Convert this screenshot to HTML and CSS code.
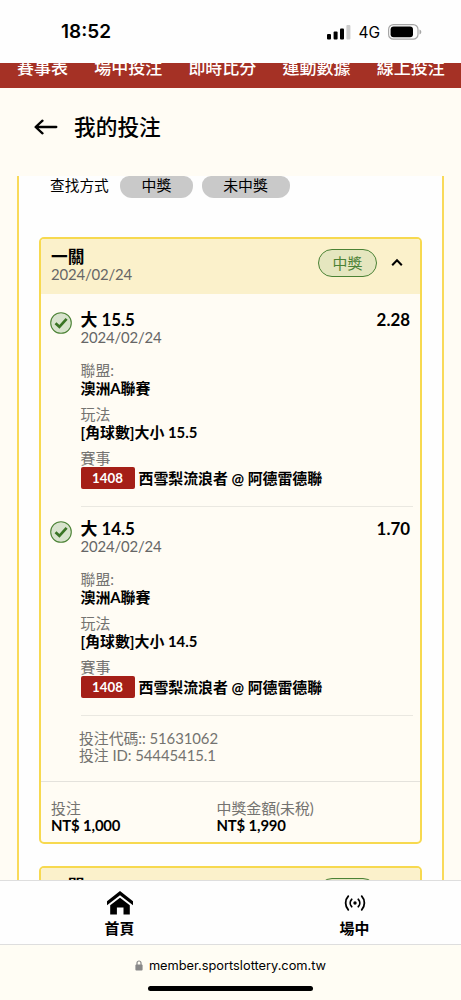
FILE: index.html
```html
<!DOCTYPE html>
<html lang="zh-Hant">
<head>
<meta charset="utf-8">
<title>我的投注</title>
<link rel="stylesheet" href="styles.css">
</head>
<body>
<div class="phone">
  <header class="status">
    <span class="clock">18:52</span>
    <div class="indicators">
      <svg class="signal" width="24" height="15" viewBox="0 0 24 15"><rect x="0" y="9" width="4" height="5.5" rx="1"/><rect x="6.6" y="6.5" width="4" height="8" rx="1"/><rect x="13" y="3.4" width="4" height="11.1" rx="1"/><rect x="19.4" y="0" width="4" height="14.5" rx="1" fill="#ccc"/></svg>
      <span class="network">4G</span>
      <svg class="battery" width="34" height="16" viewBox="0 0 34 16"><rect x=".6" y=".6" width="29.4" height="14.6" rx="4.8" fill="none" stroke="#a6a6a6" stroke-width="1.2"/><rect x="2.6" y="2.5" width="22.4" height="10.8" rx="3"/><path d="M31.5 5.5c2.4.8 2.4 4.200 0 5z" fill="#a6a6a6"/></svg>
    </div>
  </header>
  <nav class="topnav"><span>賽事表</span><span>場中投注</span><span>即時比分</span><span>運動數據</span><span>線上投注</span></nav>
  <div class="title">
    <svg width="24" height="18" viewBox="0 0 24 18" fill="none" stroke="#000" stroke-width="2.300" stroke-linecap="round" stroke-linejoin="round"><path d="M22.300 9H1.800M8.500 2.700L1.600 9l6.900 6.300"/></svg>
    <h1>我的投注</h1>
  </div>
  <main class="scroll">
    <div class="panel">
      <div class="filters"><span class="filter-label">查找方式</span><span class="chip">中獎</span><span class="chip wide">未中獎</span></div>
      <section class="card">
        <div class="card-head">
          <div><h2>一關</h2><p class="date">2024/02/24</p></div>
          <span class="won">中獎</span>
          <svg class="chevron" width="12" height="9" viewBox="0 0 12 9" fill="none" stroke="#000" stroke-width="2"><path d="M1.200 7.300L6 2.300l4.800 5"/></svg>
        </div>
        <div class="legs">
          <article class="leg">
            <svg class="check" width="22" height="22" viewBox="0 0 22 22"><circle cx="11" cy="11" r="10.300" fill="#d8e3cd" stroke="#4b8235" stroke-width="1.100"/><path d="M5.500 11.200l3.900 3.600 7.200-8" fill="none" stroke="#3a7425" stroke-width="2.700"/></svg>
            <div class="leg-body">
              <div class="pick"><span>大 15.5</span><span>2.28</span></div>
              <p class="date">2024/02/24</p>
              <dl><dt>聯盟:</dt><dd>澳洲A聯賽</dd><dt>玩法</dt><dd>[角球數]大小 15.5</dd><dt>賽事</dt></dl>
              <div class="match"><span class="code">1408</span><span>西雪梨流浪者 @ 阿德雷德聯</span></div>
            </div>
          </article>
          <article class="leg">
            <svg class="check" width="22" height="22" viewBox="0 0 22 22"><circle cx="11" cy="11" r="10.300" fill="#d8e3cd" stroke="#4b8235" stroke-width="1.100"/><path d="M5.500 11.200l3.900 3.600 7.200-8" fill="none" stroke="#3a7425" stroke-width="2.700"/></svg>
            <div class="leg-body">
              <div class="pick"><span>大 14.5</span><span>1.70</span></div>
              <p class="date">2024/02/24</p>
              <dl><dt>聯盟:</dt><dd>澳洲A聯賽</dd><dt>玩法</dt><dd>[角球數]大小 14.5</dd><dt>賽事</dt></dl>
              <div class="match"><span class="code">1408</span><span>西雪梨流浪者 @ 阿德雷德聯</span></div>
            </div>
          </article>
        </div>
        <div class="ids"><p>投注代碼:: 51631062</p><p>投注 ID: 54445415.1</p></div>
        <div class="totals">
          <div><p>投注</p><strong>NT$ 1,000</strong></div>
          <div><p>中獎金額(未稅)</p><strong>NT$ 1,990</strong></div>
        </div>
      </section>
      <section class="card">
        <div class="card-head">
          <div><h2>一關</h2><p class="date">2024/02/24</p></div>
          <span class="won">中獎</span>
          <svg class="chevron" width="12" height="9" viewBox="0 0 12 9" fill="none" stroke="#000" stroke-width="2"><path d="M1.200 7.300L6 2.300l4.800 5"/></svg>
        </div>
      </section>
    </div>
  </main>
  <nav class="tabs">
    <div class="tab">
      <svg width="28" height="24" viewBox="0 0 28 24"><path d="M14 0l13 10.200v4L14 4.200 1 14.200v-4z"/><path d="M14 6.800l9.800 7.400V23.500h-6.300v-7h-6.600v7H4.200v-9.300z"/></svg>
      <span>首頁</span>
    </div>
    <div class="tab">
      <svg width="28" height="24" viewBox="0 0 28 24" fill="none" stroke="#000" stroke-width="1.800" stroke-linecap="round"><circle cx="14" cy="12" r="1.700" fill="#000" stroke="none"/><path d="M10.700 8.300a5.400 5.400 0 0 0 0 7.400M17.300 8.300a5.400 5.400 0 0 1 0 7.400M7.300 5.200a10 10 0 0 0 0 13.600M20.700 5.200a10 10 0 0 1 0 13.600"/></svg>
      <span>場中</span>
    </div>
  </nav>
  <footer class="browser">
    <div class="address">
      <svg width="8" height="11" viewBox="0 0 8 11"><path d="M2 5V3a2 2 0 0 1 4 0v2" fill="none" stroke="#888" stroke-width="1.200"/><rect x=".4" y="4.500" width="7.200" height="6" rx="1" fill="#888"/></svg>
      <span>member.sportslottery.com.tw</span>
    </div>
    <div class="home-bar"></div>
  </footer>
</div>
</body>
</html>
```
FILE: styles.css
```css
* { box-sizing: border-box; margin: 0; padding: 0; }
body {
  width: 461px;
  height: 1000px;
  overflow: hidden;
  background: #fffcf4;
  color: #000;
  font-family: Lato, "Noto Sans CJK TC", sans-serif;
  font-size: 14.9px;
}
svg { display: block; flex: none; }
.phone { height: 1000px; display: flex; flex-direction: column; }

.status { height: 63px; flex: none; background: #fefefe; display: flex; justify-content: space-between; padding: 20px 39px 0 61px; font-family: Inter, sans-serif; }
.clock { font-size: 19px; line-height: 24px; font-weight: 600; }
.indicators { display: flex; height: 24px; align-items: center; }
.network { font-size: 15.5px; font-weight: 400; line-height: 25px; margin: 0 8px 0 7px; }

.topnav { height: 24.500px; flex: none; background: #a53125; color: #fff; display: flex; gap: 26.200px; padding-left: 17px; overflow: hidden; font-size: 17px; font-weight: 500; white-space: nowrap; line-height: 9px; }

.title { height: 88px; flex: none; display: flex; align-items: flex-start; padding: 26px 0 0 34px; gap: 16px; }
.title svg { margin-top: 4px; }
.title h1 { font-size: 21.700px; line-height: 26px; font-weight: 500; }

.scroll { height: 704.500px; flex: none; overflow: hidden; padding: 0 17px; }
.panel { height: 730px; background: #fefefe; border: solid #f9da5a; border-width: 0 2px; padding: 0 20px; }
.filters { height: 61.500px; display: flex; align-items: flex-start; padding-left: 11px; }
.filter-label { line-height: 19px; width: 70px; font-size: 14.700px; }
.chip { height: 22.500px; line-height: 19px; width: 73px; text-align: center; background: #c9c9c9; border-radius: 9px 9px 12px 12px; margin-right: 8.500px; }
.chip.wide { width: 88px; }

.card { background: #fffcf4; border: 2px solid #f7d94f; border-radius: 5px; height: 607px; margin-bottom: 21.500px; overflow: hidden; }
.card-head { height: 55px; background: #fbf1cb; display: flex; padding: 9px 17px 0 10px; }
.card-head h2 { font-size: 16.700px; line-height: 18px; font-weight: 600; }
.date { color: #666; line-height: 17px; letter-spacing: -.15px; }
.won { width: 59px; height: 28px; margin: 1px 14px 0 auto; border: 1px solid #4b8235; border-radius: 14px; background: #e5e6bf; color: #4b8235; text-align: center; line-height: 27px; }
.chevron { margin-top: 10px; }

.legs { padding: 4px 7px 0 9px; }
.leg { display: flex; height: 209px; gap: 8.500px; padding-top: 12px; }
.check { margin-top: 2px; }
.leg-body { flex: 1; border-bottom: 1.500px solid #eae8e1; }
.pick { display: flex; justify-content: space-between; padding-right: 3px; font-size: 16.900px; line-height: 20px; height: 19px; font-weight: 700; }
dl { padding-top: 15px; }
dt { line-height: 18px; color: #747370; }
dd { line-height: 19px; font-weight: 700; margin-bottom: 7px; }
.match { display: flex; gap: 4px; line-height: 23px; font-weight: 700; white-space: nowrap; }
.code { background: #a51f17; color: #fff; width: 54px; height: 22px; line-height: 23px; border-radius: 2px; text-align: center; font-size: 13.300px; }

.ids { height: 66px; padding: 14px 0 0 38px; color: #747370; border-bottom: 1px solid #e4e2dc; letter-spacing: -.06px; }
.ids p { line-height: 16.500px; }
.totals { display: flex; padding: 17.500px 0 0 10px; }
.totals div { width: 165.500px; white-space: nowrap; }
.totals p { line-height: 17px; color: #747370; }
.totals strong { display: block; line-height: 16px; letter-spacing: -.15px; }

.tabs { height: 65px; flex: none; background: #fefefe; border-top: 1px solid #dedede; border-bottom: 1px solid #dedede; display: grid; grid-template-columns: 239px 231px; }
.tab { display: flex; flex-direction: column; align-items: center; padding-top: 9.500px; font-weight: 700; }
.tab span { line-height: 26px; }

.browser { flex: 1; background: #fffdf4; display: flex; flex-direction: column; align-items: center; }
.address { display: flex; align-items: center; gap: 6px; height: 20px; margin-top: 10px; font-family: Inter, sans-serif; font-size: 12.800px; }
.home-bar { width: 165px; height: 5px; border-radius: 3px; background: #000; margin: 11px 0 0 0; }
```
